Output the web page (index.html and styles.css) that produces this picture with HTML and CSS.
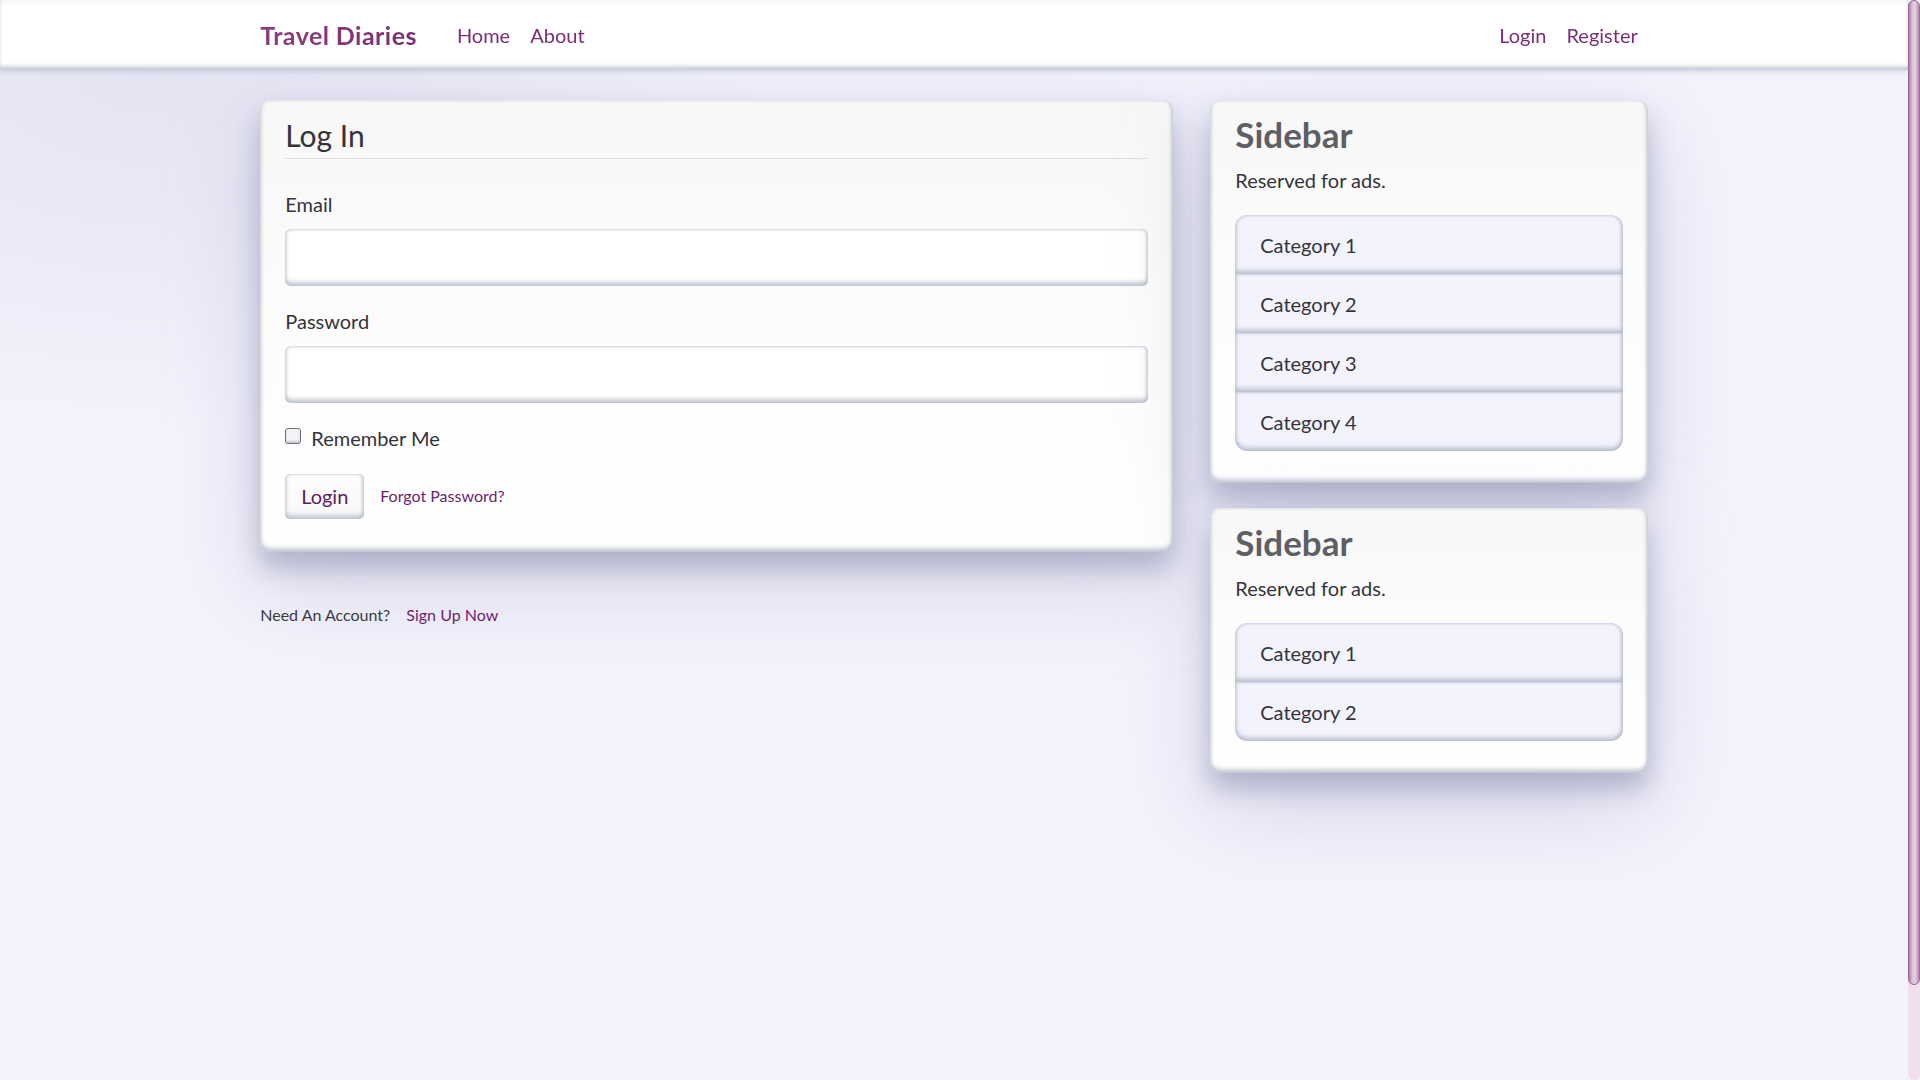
FILE: index.html
```html
<!DOCTYPE html>
<html lang="en">
<head>
<meta charset="utf-8">
<title>Travel Diaries - Login</title>
<link rel="stylesheet" href="styles.css">
</head>
<body>
<div class="page">
<header class="site-header">
  <nav class="navbar">
    <div class="container nav-inner">
      <a class="brand" href="#">Travel Diaries</a>
      <div class="nav-group">
        <a class="nav-link" href="#">Home</a>
        <a class="nav-link" href="#">About</a>
      </div>
      <div class="nav-group nav-right">
        <a class="nav-link" href="#">Login</a>
        <a class="nav-link" href="#">Register</a>
      </div>
    </div>
  </nav>
</header>
<main class="container">
  <div class="row">
    <div class="col-main">
      <div class="content-section">
        <form class="login-form">
          <fieldset class="fieldset">
            <legend class="legend">Log In</legend>
            <div class="form-group">
              <label class="label">Email</label>
              <input class="form-control" type="text">
            </div>
            <div class="form-group">
              <label class="label">Password</label>
              <input class="form-control" type="password">
            </div>
            <div class="form-check">
              <span class="check-box"></span>
              <span class="check-label">Remember Me</span>
            </div>
          </fieldset>
          <div class="form-actions">
            <button class="btn" type="button">Login</button>
            <a class="small-link" href="#">Forgot Password?</a>
          </div>
        </form>
      </div>
      <div class="account-row">
        <span class="muted">Need An Account?</span>
        <a class="small-link signup" href="#">Sign Up Now</a>
      </div>
    </div>
    <div class="col-side">
      <div class="content-section side">
        <h3 class="side-title">Sidebar</h3>
        <p class="side-text">Reserved for ads.</p>
        <ul class="list-group">
          <li class="list-item">Category 1</li>
          <li class="list-item">Category 2</li>
          <li class="list-item">Category 3</li>
          <li class="list-item">Category 4</li>
        </ul>
      </div>
      <div class="content-section side">
        <h3 class="side-title">Sidebar</h3>
        <p class="side-text">Reserved for ads.</p>
        <ul class="list-group">
          <li class="list-item">Category 1</li>
          <li class="list-item">Category 2</li>
        </ul>
      </div>
    </div>
  </div>
</main>
</div>
<div class="scrollbar"><div class="scroll-thumb"></div></div>
</body>
</html>
```
FILE: styles.css
```css
* { box-sizing: border-box; }

html {
  background: #f3f3fd;
  overflow: hidden;
}

body {
  margin: 0;
  height: 1080px;
  overflow: hidden;
  font-family: Lato, "Open Sans", "Noto Sans", sans-serif;
  font-size: 20px;
  line-height: 1.5;
  color: #34343c;
  background:
    radial-gradient(ellipse 900px 520px at 8% 6%, rgba(224, 224, 240, 0.85), rgba(243, 243, 253, 0) 70%),
    #f3f3fd;
}

.page {
  margin-right: 12px;
  padding-top: 100px;
}

a { text-decoration: none; }

.container {
  width: 1425px;
  margin: 0 auto;
  padding: 0 18.75px;
}

/* fake overlay scrollbar */
.scrollbar {
  position: fixed;
  top: 0;
  right: 0;
  width: 12px;
  height: 1080px;
  background: #efe0ec;
  border-radius: 6px;
  z-index: 20;
}
.scroll-thumb {
  height: 985px;
  border-radius: 6px;
  border: 1px solid #9d6496;
  background: linear-gradient(90deg, #b47aac 0%, #d9c4d7 35%, #e2d3e1 60%, #bb88b4 100%);
}

/* Navbar */
.site-header {
  position: fixed;
  top: 0;
  left: 0;
  right: 12px;
  z-index: 10;
}
.navbar {
  height: 70px;
  background: linear-gradient(#f5f5f7 0, #ffffff 6px, #ffffff 62px, #f4f4f6 66px);
  box-shadow: inset 0 -3px 3px rgba(150, 158, 172, 0.45), 0 2px 4px rgba(160, 165, 185, 0.35);
}
.nav-inner {
  display: flex;
  align-items: center;
  height: 70px;
}
.brand {
  font-size: 25px;
  font-weight: 700;
  color: #8a3a7c;
  background: linear-gradient(90deg, #8e3c80, #7a2e70);
  -webkit-background-clip: text;
  background-clip: text;
  -webkit-text-fill-color: transparent;
  margin-right: 30px;
  line-height: 30px;
  letter-spacing: 0.45px;
}
.nav-group { display: flex; }
.nav-right { margin-left: auto; }
.nav-link {
  padding: 10px;
  line-height: 30px;
  color: #7b2d78;
  font-size: 20px;
}

/* Layout */
.row {
  display: flex;
  gap: 37.5px;
}
.col-main { flex: 0 0 912.5px; }
.col-side { flex: 1 1 auto; }

/* Cards */
.content-section {
  background: linear-gradient(180deg, #f7f7f7 0%, #fcfcfd 45%, #ffffff 100%);
  border-radius: 10px;
  padding: 12.5px 25px;
  margin-bottom: 25px;
  box-shadow:
    inset 0 -4px 4px rgba(165, 174, 188, 0.6),
    inset -2px 0 3px rgba(185, 190, 202, 0.5),
    inset 2px 0 3px rgba(220, 224, 232, 0.6),
    0 16px 26px rgba(125, 125, 160, 0.45),
    0 30px 90px rgba(160, 160, 195, 0.4);
}

.fieldset {
  border: 0;
  margin: 0;
  padding: 0;
  min-width: 0;
}
.legend {
  display: block;
  width: 100%;
  padding: 0;
  font-size: 30px;
  line-height: 45px;
  font-weight: 400;
  color: #34343a;
  border-bottom: 1px solid #dedee2;
  margin-bottom: 30px;
}
.form-group { margin-bottom: 20px; }
.label {
  display: block;
  margin-bottom: 10px;
  line-height: 30px;
  color: #34343c;
}
.form-control {
  display: block;
  width: 100%;
  height: 57px;
  border: 0;
  border-radius: 6px;
  background: #ffffff;
  box-shadow:
    inset 0 -4px 4px rgba(160, 168, 182, 0.6),
    inset 0 1px 2px rgba(200, 205, 215, 0.6),
    inset 2px 0 3px rgba(215, 218, 228, 0.5),
    inset -2px 0 3px rgba(195, 200, 212, 0.5);
  font-size: 25px;
  padding: 10px 20px;
  outline: none;
}
.form-check {
  display: flex;
  align-items: center;
  height: 30px;
  margin-bottom: 21px;
}
.check-box {
  width: 16px;
  height: 16px;
  border: 1.5px solid #6e6e74;
  border-radius: 3px;
  background: #f4f4f6;
  box-shadow: inset 0 -2px 2px rgba(160, 165, 178, 0.5);
  margin-right: 10px;
  margin-top: -4px;
}
.check-label { color: #34343c; line-height: 30px; }

.form-actions {
  display: flex;
  align-items: center;
  margin-bottom: 21px;
}
.btn {
  font-family: inherit;
  font-size: 20px;
  line-height: 30px;
  color: #5a1f5c;
  height: 45px;
  width: 79px;
  padding: 7px 0;
  text-align: center;
  border: 0;
  border-radius: 5px;
  background: linear-gradient(#fdfdfd, #f8f8fa);
  box-shadow:
    inset 0 -4px 4px rgba(165, 172, 186, 0.6),
    inset 2px 0 3px rgba(215, 218, 228, 0.6),
    inset -2px 0 3px rgba(195, 200, 212, 0.6),
    inset 0 1px 2px rgba(220, 222, 230, 0.6);
}
.small-link {
  font-size: 16px;
  color: #6b1f6d;
  margin-left: 16px;
}

.account-row {
  border-top: 1px solid #dcdce4;
  padding-top: 22px;
  font-size: 16px;
  line-height: 30px;
}
.muted { color: #3a3a42; }
.signup { margin-left: 12px; }

/* Sidebar */
.side-title {
  margin: 0 0 10px;
  font-size: 35px;
  line-height: 42px;
  font-weight: 700;
  color: #5e5e64;
}
.side-text {
  margin: 0 0 20px;
  line-height: 30px;
  color: #34343c;
}
.list-group {
  list-style: none;
  margin: 0 0 20px;
  padding: 0;
  border-radius: 12px;
  overflow: hidden;
  background: #f3f3fd;
}
.list-item {
  height: 59px;
  padding: 15px 25px 14px;
  line-height: 30px;
  color: #34343c;
  background: #f3f3fd;
  box-shadow:
    inset 0 -4px 4px rgba(160, 168, 185, 0.55),
    inset 2px 0 3px rgba(205, 208, 222, 0.7),
    inset -2px 0 3px rgba(190, 195, 210, 0.7),
    inset 0 1px 2px rgba(215, 218, 232, 0.7);
}
.list-item:first-child { border-radius: 12px 12px 0 0; }
.list-item:last-child { border-radius: 0 0 12px 12px; }
```
